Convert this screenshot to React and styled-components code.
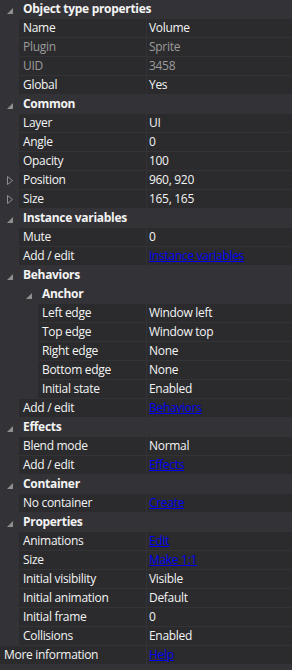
import React from 'react';
import styled, { createGlobalStyle } from 'styled-components';

const GlobalStyle = createGlobalStyle`
    body {
        margin: 0;
        background: #333337;
        font-family: "Open Sans", "Noto Sans", sans-serif;
        font-size: 12px;
        letter-spacing: -0.3px;
    }
`;

const Panel = styled.div`
    width: 292px;
    height: 670px;
    background: #333337;
    overflow: hidden;
`;

const Row = styled.div`
    display: flex;
    height: 18px;
    margin-bottom: 1px;
    color: #f1f1f1;
`;

const Gutter = styled.div`
    width: ${p => p.$indent}px;
    flex-shrink: 0;
    position: relative;
`;

const NameCell = styled.div`
    flex: 1;
    min-width: 0;
    background: ${p => (p.$category ? 'transparent' : '#2b2b2e')};
    padding-left: 4px;
    line-height: 18px;
    white-space: nowrap;
    overflow: ${p => (p.$category ? 'visible' : 'hidden')};
    font-weight: ${p => (p.$category ? 700 : 400)};
    color: ${p => (p.$muted ? '#9b9b9b' : '#f4f4f4')};
`;

const ValueCell = styled.div`
    width: 143px;
    flex-shrink: 0;
    margin-left: 1px;
    background: ${p => (p.$category ? 'transparent' : '#2b2b2e')};
    padding-left: 2px;
    line-height: 18px;
    white-space: nowrap;
    overflow: hidden;
    color: ${p => (p.$muted ? '#9b9b9b' : '#f4f4f4')};
`;

const Link = styled.a`
    color: #0000ee;
    text-decoration: underline;
`;

const Toggle = styled.svg`
    position: absolute;
    left: ${p => p.$left}px;
    top: ${p => p.$top}px;
`;

function Expanded({ left }) {
    return (
        <Toggle $left={left} $top={8} width="6" height="6" viewBox="0 0 6 6">
            <polygon points="6,0 6,6 0,6" fill="#8f8f8f" />
        </Toggle>
    );
}

function Collapsed({ left }) {
    return (
        <Toggle $left={left} $top={5} width="6" height="9" viewBox="0 0 6 9">
            <polygon points="0.5,0.5 5.5,4.5 0.5,8.5" fill="none" stroke="#8f8f8f" />
        </Toggle>
    );
}

function Category({ name, indent = 19, arrow = 7 }) {
    return (
        <Row>
            <Gutter $indent={indent}><Expanded left={arrow} /></Gutter>
            <NameCell $category>{name}</NameCell>
            <ValueCell $category />
        </Row>
    );
}

function Prop({ name, value, link, muted, collapsed, indent = 19 }) {
    return (
        <Row>
            <Gutter $indent={indent}>{collapsed && <Collapsed left={7} />}</Gutter>
            <NameCell $muted={muted}>{name}</NameCell>
            <ValueCell $muted={muted}>
                {link ? <Link href="#">{link}</Link> : value}
            </ValueCell>
        </Row>
    );
}

export default function App() {
    return (
        <Panel>
            <GlobalStyle />
            <Category name="Object type properties" />
            <Prop name="Name" value="Volume" />
            <Prop name="Plugin" value="Sprite" muted />
            <Prop name="UID" value="3458" muted />
            <Prop name="Global" value="Yes" />
            <Category name="Common" />
            <Prop name="Layer" value="UI" />
            <Prop name="Angle" value="0" />
            <Prop name="Opacity" value="100" />
            <Prop name="Position" value="960, 920" collapsed />
            <Prop name="Size" value="165, 165" collapsed />
            <Category name="Instance variables" />
            <Prop name="Mute" value="0" />
            <Prop name="Add / edit" link="Instance variables" />
            <Category name="Behaviors" />
            <Category name="Anchor" indent={38} arrow={26} />
            <Prop name="Left edge" value="Window left" indent={38} />
            <Prop name="Top edge" value="Window top" indent={38} />
            <Prop name="Right edge" value="None" indent={38} />
            <Prop name="Bottom edge" value="None" indent={38} />
            <Prop name="Initial state" value="Enabled" indent={38} />
            <Prop name="Add / edit" link="Behaviors" />
            <Category name="Effects" />
            <Prop name="Blend mode" value="Normal" />
            <Prop name="Add / edit" link="Effects" />
            <Category name="Container" />
            <Prop name="No container" link="Create" />
            <Category name="Properties" />
            <Prop name="Animations" link="Edit" />
            <Prop name="Size" link="Make 1:1" />
            <Prop name="Initial visibility" value="Visible" />
            <Prop name="Initial animation" value="Default" />
            <Prop name="Initial frame" value="0" />
            <Prop name="Collisions" value="Enabled" />
            <Prop name="More information" link="Help" indent={0} />
        </Panel>
    );
}
